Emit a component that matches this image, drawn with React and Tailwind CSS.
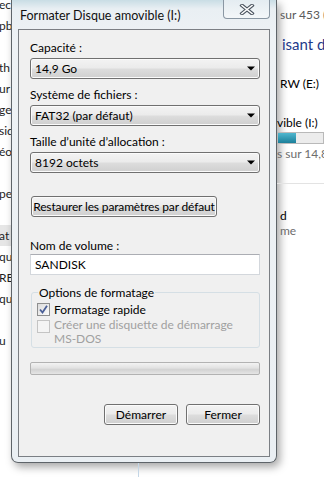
import React from 'react';

const leftRows = ['ech', 'pb', '', 'th', 'ur', 'ge', 'siq', 'éos', '', 'pe', '', 'at', 'qu', 'RB', 'qu', '', 'u'];

function Combo({ value }) {
  return (
    <div className="h-[21px] w-[230px] rounded-[3px] border border-[#707070] bg-[linear-gradient(to_bottom,#f3f3f3_0%,#ebebeb_48%,#dddddd_52%,#cfcfcf_100%)] shadow-[inset_0_0_0_1px_#fbfbfb] flex items-center pl-[4px] pr-[4px]">
      <span className="flex-1 leading-none">{value}</span>
      <svg width="8" height="5" viewBox="0 0 8 5">
        <path d="M0 0.5H8L4 4.5Z" fill="#000" />
      </svg>
    </div>
  );
}

function Button({ label, className }) {
  return (
    <div
      className={`h-[21px] rounded-[3px] border border-[#707070] bg-[linear-gradient(to_bottom,#f3f3f3_0%,#ebebeb_48%,#dddddd_52%,#cfcfcf_100%)] shadow-[inset_0_0_0_1px_#fbfbfb] flex items-center justify-center leading-none whitespace-nowrap ${className}`}
    >
      {label}
    </div>
  );
}

function Check({ checked, disabled }) {
  return (
    <div
      className={`w-[13px] h-[13px] shrink-0 border flex items-center justify-center ${
        disabled
          ? 'border-[#c4c4c4] bg-[#f4f4f4]'
          : 'border-[#8e8f8f] bg-[linear-gradient(135deg,#dcdcdc,#fbfbfb)]'
      }`}
    >
      {checked && (
        <svg width="9" height="9" viewBox="0 0 9 9">
          <path d="M1 4.5L3.5 7.5L8 0.8" stroke="#4a5f97" strokeWidth="1.8" fill="none" />
        </svg>
      )}
    </div>
  );
}

export default function App() {
  return (
    <div className="w-[324px] h-[477px] overflow-hidden bg-white flex text-[12px] text-black font-['Lato','Noto_Sans',sans-serif]">
      {/* left strip of explorer behind */}
      <div className="w-[11px] shrink-0 overflow-hidden flex flex-col -mt-[6px] text-[#1e1e1e]">
        {leftRows.map((t, i) => (
          <div
            key={i}
            className={`h-[21px] leading-[21px] whitespace-nowrap -ml-[1px] ${i === 11 ? 'bg-[#e6e6e6]' : ''}`}
          >
            {t}
          </div>
        ))}
      </div>

      {/* dialog */}
      <div className="w-[266px] shrink-0 flex flex-col">
        <div className="h-[463px] rounded-b-[7px] border border-t-0 border-[#5e6469] bg-[linear-gradient(to_bottom,#c9dde5_0px,#e9eff3_9px,#eef2f5_40px,#eaeff3_100%)] shadow-[3px_4px_8px_rgba(0,0,0,0.35)] flex flex-col px-[6px] pb-[5px]">
          {/* title bar */}
          <div className="h-[29px] flex items-start">
            <span className="pl-[2px] pt-[7px] text-[12.5px] text-[#111] whitespace-nowrap">Formater Disque amovible (I:)</span>
            <div className="ml-auto w-[47px] h-[19px] rounded-b-[4px] border border-t-0 border-[#8a97a3] bg-[linear-gradient(to_bottom,#e4ecf1,#f4f7f9)] flex items-center justify-center">
              <svg width="16" height="11" viewBox="0 0 16 11">
                <path d="M3 1.5L13 9.5M13 1.5L3 9.5" stroke="#4c5560" strokeWidth="3.6" strokeLinecap="square" />
                <path d="M3 1.5L13 9.5M13 1.5L3 9.5" stroke="#ffffff" strokeWidth="1.6" strokeLinecap="square" />
              </svg>
            </div>
          </div>

          {/* client area */}
          <div className="flex-1 border border-[#7b7f84] bg-[#f0f0f0] flex flex-col pl-[11px]">
            <div className="mt-[10px] h-[15px] leading-[15px]">Capacité :</div>
            <div className="mt-[3px]">
              <Combo value="14,9 Go" />
            </div>
            <div className="mt-[8px] h-[15px] leading-[15px]">Système de fichiers :</div>
            <div className="mt-[3px]">
              <Combo value="FAT32 (par défaut)" />
            </div>
            <div className="mt-[8px] h-[15px] leading-[15px]">Taille d’unité d’allocation :</div>
            <div className="mt-[3px]">
              <Combo value="8192 octets" />
            </div>
            <Button
              label="Restaurer les paramètres par défaut"
              className="mt-[23px] ml-[1px] w-[186px] tracking-[-0.15px]"
            />

            <div className="mt-[21px] h-[15px] leading-[15px]">Nom de volume :</div>
            <div className="mt-[1px] w-[230px] h-[21px] bg-white border border-[#d3d7dc] border-t-[#abadb3] flex items-center pl-[4px] leading-none">
              SANDISK
            </div>

            {/* group box */}
            <div className="mt-[10px] ml-[1px] w-[229px] flex flex-col">
              <div className="h-[15px] leading-[15px] pl-[7px] -mb-[8px] relative z-10">
                <span className="bg-[#f0f0f0] px-[1px]">Options de formatage</span>
              </div>
              <div className="h-[56px] rounded-[3px] border border-[#d5dfe5] flex flex-col pl-[5px] pt-[10px]">
                <div className="flex items-center gap-[4px] h-[13px]">
                  <Check checked />
                  <span className="leading-none">Formatage rapide</span>
                </div>
                <div className="flex items-start gap-[4px] mt-[4px]">
                  <Check disabled />
                  <div className="flex flex-col text-[#a0a0a0] -mt-[2px] leading-[14px]">
                    <span>Créer une disquette de démarrage</span>
                    <span>MS-DOS</span>
                  </div>
                </div>
              </div>
            </div>

            <div className="mt-[14px] w-[230px] h-[13px] rounded-[2px] border border-[#b2b2b2] bg-[linear-gradient(to_bottom,#f3f3f3_0%,#e2e2e2_45%,#d3d3d3_60%,#e5e5e5_100%)]" />

            <div className="mt-[29px] flex gap-[8px] pl-[74px]">
              <Button label="Démarrer" className="w-[74px]" />
              <Button label="Fermer" className="w-[74px]" />
            </div>
          </div>
        </div>
        <div className="ml-[127px] w-px h-[14px] bg-[#c4d6e6]" />
      </div>

      {/* right strip of explorer behind */}
      <div className="flex-1 overflow-hidden flex flex-col pl-[3px] whitespace-nowrap">
        <div className="mt-[7px] h-[15px] leading-[15px] text-[#5a5a5a]">sur 453 (</div>
        <div className="mt-[12px] h-[20px] leading-[20px] text-[15px] text-[#1e3a8a] ml-[2px]">isant de</div>
        <div className="mt-[22px] h-[15px] leading-[15px]">RW (E:)</div>
        <div className="mt-[24px] h-[15px] leading-[15px] -ml-[3px]">vible (I:)</div>
        <div className="mt-[2px] -ml-[3px] h-[12px] flex border border-[#b9b9b9]">
          <div className="w-[18px] bg-[linear-gradient(to_bottom,#4fb7cf,#1b7f9a)]" />
          <div className="flex-1 bg-[#ececec]" />
        </div>
        <div className="mt-[2px] h-[15px] leading-[15px] text-[#6d6d6d] -ml-[3px]">s sur 14,8</div>
        <div className="mt-[22px] h-px bg-[#e3e3e3] -ml-[3px]" />
        <div className="mt-[24px] h-[15px] leading-[15px]">d</div>
        <div className="h-[15px] leading-[15px] text-[#6d6d6d]">me</div>
      </div>
    </div>
  );
}
